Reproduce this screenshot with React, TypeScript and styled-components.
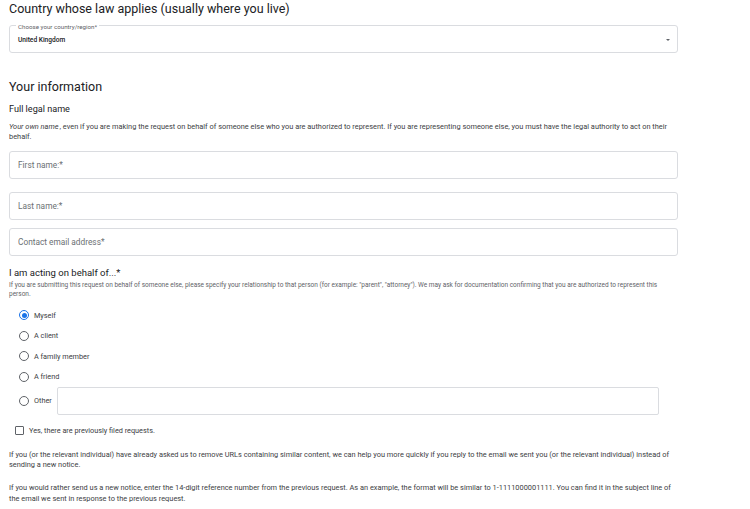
import React from "react";
import styled, { createGlobalStyle } from "styled-components";

const GlobalStyle = createGlobalStyle`
  html, body {
    margin: 0;
    background: #ffffff;
  }
  body {
    font-family: Roboto, "Liberation Sans", Arial, sans-serif;
    color: #202124;
  }
  * {
    box-sizing: border-box;
  }
`;

const Page = styled.main`
  width: 687px;
  padding: 0 9px;
  display: flex;
  flex-direction: column;
`;

const Title = styled.h1`
  margin: 0 0 7px;
  font-size: 12.5px;
  line-height: 18px;
  font-weight: 400;
  color: #202124;
`;

const SectionTitle = styled.h2`
  margin: 25.5px 0 0;
  font-size: 12.5px;
  line-height: 16px;
  font-weight: 400;
  color: #202124;
`;

const SubTitle = styled.h3<{ $size?: number; $top: number }>`
  margin: ${(p) => p.$top}px 0 0;
  font-size: ${(p) => p.$size ?? 9.1}px;
  line-height: 12px;
  font-weight: 400;
  color: #202124;
`;

const Help = styled.p<{ $small?: boolean; $top: number }>`
  margin: ${(p) => p.$top}px 0 0;
  max-width: 662px;
  font-size: ${(p) => (p.$small ? "6.5px" : "7.4px")};
  line-height: ${(p) => (p.$small ? "9.5px" : "10.2px")};
  color: ${(p) => (p.$small ? "#5f6368" : "#3c4043")};

  & em {
    font-style: italic;
    margin-right: 1px;
  }
`;

const SelectBox = styled.div`
  position: relative;
  height: 28px;
  border: 1px solid #dadce0;
  border-radius: 3px;
  display: flex;
  align-items: center;
  justify-content: space-between;
  padding: 1px 8px 0;
`;

const NotchLabel = styled.span`
  position: absolute;
  top: -2px;
  left: 6px;
  padding: 0 2px;
  background: #ffffff;
  font-size: 6.2px;
  line-height: 7px;
  color: #5f6368;
`;

const SelectValue = styled.span`
  font-size: 6.6px;
  font-weight: 500;
  color: #202124;
`;

const Caret = styled.span`
  width: 0;
  height: 0;
  border-left: 2.5px solid transparent;
  border-right: 2.5px solid transparent;
  border-top: 2.5px solid #5f6368;
  margin-right: -1px;
`;

const TextInput = styled.input<{ $top: number }>`
  display: block;
  width: 100%;
  height: 28px;
  margin-top: ${(p) => p.$top}px;
  padding: 0 8px;
  border: 1px solid #dadce0;
  border-radius: 3px;
  background: #ffffff;
  font-family: Roboto, "Liberation Sans", Arial, sans-serif;
  font-size: 8.3px;
  color: #202124;
  outline: none;

  &::placeholder {
    color: #6b6f73;
  }
`;

const RadioList = styled.div`
  margin-top: 5px;
  padding-left: 10px;
  display: flex;
  flex-direction: column;
`;

const RadioRow = styled.label<{ $tall?: boolean }>`
  height: ${(p) => (p.$tall ? "28px" : "20.5px")};
  display: flex;
  align-items: center;
  gap: 5px;
  font-size: 7.3px;
  color: #3c4043;
`;

const RadioDot = styled.span<{ $checked?: boolean }>`
  flex: none;
  width: 10px;
  height: 10px;
  border-radius: 50%;
  border: 1.2px solid ${(p) => (p.$checked ? "#1a73e8" : "#5f6368")};
  display: flex;
  align-items: center;
  justify-content: center;

  &::after {
    content: "";
    width: 5px;
    height: 5px;
    border-radius: 50%;
    background: ${(p) => (p.$checked ? "#1a73e8" : "transparent")};
  }
`;

const OtherInput = styled.input`
  width: 602px;
  height: 28px;
  border: 1px solid #dadce0;
  border-radius: 2px;
  background: #ffffff;
  outline: none;
`;

const CheckRow = styled.label`
  margin-top: 10px;
  padding-left: 6px;
  height: 12px;
  display: flex;
  align-items: center;
  gap: 5px;
  font-size: 7.3px;
  color: #3c4043;
`;

const CheckBox = styled.span`
  flex: none;
  width: 9px;
  height: 9px;
  border: 1.2px solid #5f6368;
  border-radius: 1px;
`;

const Notes = styled.div`
  margin-top: 13px;
  display: flex;
  flex-direction: column;
`;

const radios = ["Myself", "A client", "A family member", "A friend"];

export default function App() {
  return (
    <>
      <GlobalStyle />
      <Page>
        <Title>Country whose law applies (usually where you live)</Title>
        <SelectBox>
          <NotchLabel>Choose your country/region*</NotchLabel>
          <SelectValue>United Kingdom</SelectValue>
          <Caret />
        </SelectBox>

        <SectionTitle>Your information</SectionTitle>
        <SubTitle $top={8.5}>Full legal name</SubTitle>
        <Help $top={7}>
          <em>Your own name</em>, even if you are making the request on behalf of someone else who you are
          authorized to represent. If you are representing someone else, you must have the legal authority to
          act on their behalf.
        </Help>

        <TextInput $top={9} placeholder="First name:*" />
        <TextInput $top={13} placeholder="Last name:*" />
        <TextInput $top={8} placeholder="Contact email address*" />

        <SubTitle $top={10.5} $size={9.5}>
          I am acting on behalf of...*
        </SubTitle>
        <Help $small $top={2}>
          If you are submitting this request on behalf of someone else, please specify your relationship to
          that person (for example: "parent", "attorney"). We may ask for documentation confirming that you are
          authorized to represent this person.
        </Help>

        <RadioList>
          {radios.map((r, i) => (
            <RadioRow key={r}>
              <RadioDot $checked={i === 0} />
              {r}
            </RadioRow>
          ))}
          <RadioRow $tall>
            <RadioDot />
            Other
            <OtherInput />
          </RadioRow>
        </RadioList>

        <CheckRow>
          <CheckBox />
          Yes, there are previously filed requests.
        </CheckRow>

        <Notes>
          <Help $top={0}>
            If you (or the relevant individual) have already asked us to remove URLs containing similar
            content, we can help you more quickly if you reply to the email we sent you (or the relevant
            individual) instead of sending a new notice.
          </Help>
          <Help $top={13}>
            If you would rather send us a new notice, enter the 14-digit reference number from the previous
            request. As an example, the format will be similar to 1-1111000001111. You can find it in the
            subject line of the email we sent in response to the previous request.
          </Help>
        </Notes>
      </Page>
    </>
  );
}
